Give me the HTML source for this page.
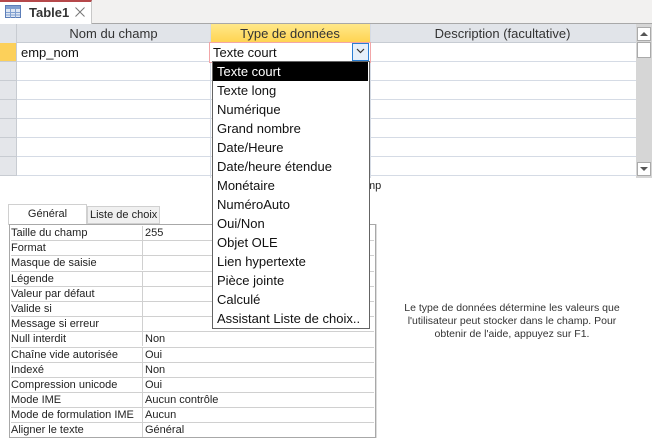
<!DOCTYPE html>
<html><head><meta charset="utf-8"><style>
*{margin:0;padding:0;box-sizing:border-box}
body{width:652px;height:443px;background:#fff;font-family:"Liberation Sans",sans-serif;position:relative;overflow:hidden;color:#222}
.a{position:absolute}
.row{position:absolute;left:0;width:636px;height:19px;border-bottom:1px solid #d5dbe5}
.sel{position:absolute;left:0;width:17px;height:19px;background:#e4e6ea;border-bottom:1px solid #c8ccd2;border-right:1px solid #c8ccd2}
.t13{font-size:13px}
.dd div{height:19px;line-height:19px;padding-left:4px;font-size:13px;color:#111;white-space:nowrap}
.pg div.r{height:15.2px;line-height:15px;font-size:11px;border-bottom:1px solid #d0d0d0;position:relative;white-space:nowrap;overflow:hidden}
.pg span{position:absolute;left:131px;right:0;top:0;border-left:1px solid #d0d0d0;padding-left:2px;height:14px;background:#fff}
</style></head><body>
<div class="a" style="left:0;top:0;width:652px;height:24px;background:#f2f1f0;border-bottom:1px solid #a8a8a8"></div>
<div class="a" style="left:0;top:0;width:92px;height:24px;background:#fff;border-top:2px solid #b5484a;border-right:1px solid #c8c8c8"></div>
<svg class="a" style="left:5px;top:5px" width="16" height="13" viewBox="0 0 16 13"><rect x=".5" y=".5" width="15" height="12" fill="#dfe7f3" stroke="#5b7db8"/><rect x="1" y="1" width="14" height="3" fill="#7f9fd0"/><path d="M1 7.5h14M1 10h14M5.5 4v9M10.5 4v9" stroke="#7f9fd0"/></svg>
<div class="a t13" style="left:29px;top:5px;font-weight:bold;color:#333">Table1</div>
<svg class="a" style="left:75px;top:7px" width="10" height="10"><path d="M0.5 0.5l9 9M9.5 0.5l-9 9" stroke="#777" stroke-width="1"/></svg>
<div class="a" style="left:0;top:24px;width:636px;height:19px;background:#e1e4e9;border-bottom:1px solid #c7ccd3"></div>
<div class="a t13" style="left:17px;top:26px;width:193px;text-align:center;color:#333">Nom du champ</div>
<div class="a t13" style="left:210px;top:24px;width:160px;height:19px;background:linear-gradient(#ffe88a,#ffd34f);text-align:center;line-height:19px;color:#333">Type de données</div>
<div class="a t13" style="left:370px;top:26px;width:265px;text-align:center;color:#333">Description (facultative)</div>
<div class="a" style="left:210px;top:24px;width:1px;height:154px;background:#d5dbe5"></div>
<div class="a" style="left:370px;top:24px;width:1px;height:154px;background:#d5dbe5"></div>
<div class="row" style="top:43px"></div><div class="row" style="top:62px"></div><div class="row" style="top:81px"></div><div class="row" style="top:100px"></div><div class="row" style="top:119px"></div><div class="row" style="top:138px"></div><div class="row" style="top:157px"></div>
<div class="sel" style="top:43px;background:#fcd05a"></div><div class="sel" style="top:62px"></div><div class="sel" style="top:81px"></div><div class="sel" style="top:100px"></div><div class="sel" style="top:119px"></div><div class="sel" style="top:138px"></div><div class="sel" style="top:157px"></div>
<div class="a" style="left:0;top:24px;width:17px;height:19px;background:#e1e4e9;border-right:1px solid #c8ccd2"></div>
<div class="a t13" style="left:21px;top:45px;color:#111">emp_nom</div>
<div class="a" style="left:209px;top:42px;width:162px;height:21px;border:1px solid #f2a6a8;background:#fff"></div>
<div class="a t13" style="left:213px;top:45px;color:#111">Texte court</div>
<div class="a" style="left:352px;top:43px;width:17px;height:18px;border:1px solid #2a7fd4;background:#e6f0fa"></div>
<svg class="a" style="left:356px;top:48px" width="9" height="6"><path d="M1 1l3.5 3.5L8 1" stroke="#333" fill="none" stroke-width="1.2"/></svg>
<div class="a" style="left:636px;top:24px;width:16px;height:154px;background:#d6d6d6"></div>
<div class="a" style="left:637px;top:27px;width:14px;height:14px;background:#fff;border:1px solid #aaa"></div>
<div class="a" style="left:640px;top:32px;width:0;height:0;border-left:4px solid transparent;border-right:4px solid transparent;border-bottom:4px solid #555"></div>
<div class="a" style="left:637px;top:42px;width:14px;height:16px;background:#fff;border:1px solid #aaa"></div>
<div class="a" style="left:637px;top:162px;width:14px;height:14px;background:#fff;border:1px solid #aaa"></div>
<div class="a" style="left:640px;top:167px;width:0;height:0;border-left:4px solid transparent;border-right:4px solid transparent;border-top:4px solid #555"></div>
<div class="a" style="left:366px;top:180px;font-size:11px">mp</div>
<div class="a" style="left:8px;top:204px;width:79px;height:21px;background:#fff;border:1px solid #d0d0d0;border-bottom:none;font-size:11px;text-align:center;line-height:18px">Général</div>
<div class="a" style="left:87px;top:206px;width:73px;height:18px;background:#f0f0f0;border:1px solid #d0d0d0;font-size:11px;line-height:16px;padding-left:2px">Liste de choix</div>
<div class="a pg" style="left:9px;top:224px;width:367px;height:214px;border:1px solid #a8a8a8;padding:1px">
<div class="r">Taille du champ<span>255</span></div>
<div class="r">Format<span></span></div>
<div class="r">Masque de saisie<span></span></div>
<div class="r">Légende<span></span></div>
<div class="r">Valeur par défaut<span></span></div>
<div class="r">Valide si<span></span></div>
<div class="r">Message si erreur<span></span></div>
<div class="r">Null interdit<span>Non</span></div>
<div class="r">Chaîne vide autorisée<span>Oui</span></div>
<div class="r">Indexé<span>Non</span></div>
<div class="r">Compression unicode<span>Oui</span></div>
<div class="r">Mode IME<span>Aucun contrôle</span></div>
<div class="r">Mode de formulation IME<span>Aucun</span></div>
<div class="r" style="border-bottom:none">Aligner le texte<span>Général</span></div>
</div>
<div class="a" style="left:376px;top:224px;width:1px;height:214px;background:#ddd"></div>
<div class="a dd" style="left:212px;top:61px;width:158px;height:268px;background:#fff;border:1px solid #646464;padding-top:0">
<div style="background:#000;color:#fff;margin:0 1px 0 0">Texte court</div>
<div>Texte long</div><div>Numérique</div><div>Grand nombre</div><div>Date/Heure</div><div>Date/heure étendue</div><div>Monétaire</div><div>NuméroAuto</div><div>Oui/Non</div><div>Objet OLE</div><div>Lien hypertexte</div><div>Pièce jointe</div><div>Calculé</div><div>Assistant Liste de choix..</div>
</div>
<div class="a" style="left:394px;top:302px;width:236px;text-align:center;font-size:10.5px;line-height:13px;color:#333">Le type de données détermine les valeurs que l'utilisateur peut stocker dans le champ. Pour<br>obtenir de l'aide, appuyez sur F1.</div>
</body></html>
